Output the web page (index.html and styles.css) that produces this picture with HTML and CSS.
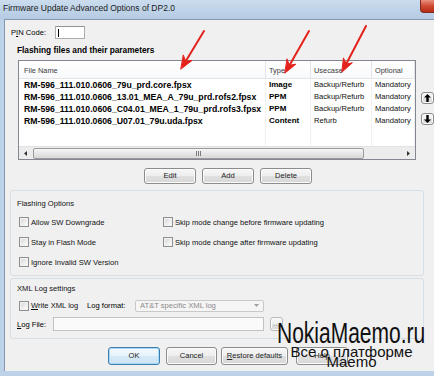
FILE: index.html
```html
<!DOCTYPE html>
<html lang="en">
  <head>
    <meta charset="UTF-8" />
    <title>Firmware Update Advanced Options of DP2.0</title>
    <link rel="stylesheet" href="styles.css">
  </head>
  <body>
    <div class="window">
      <div class="titlebar">
        <span class="title">Firmware Update Advanced Options of DP2.0</span>
        <span class="close"></span>
      </div>

      <div class="client">
        <div class="pin-row">
          <label class="pin-label">P<u>I</u>N Code:</label>
          <div class="textbox pin-box"><span class="caret"></span></div>
        </div>

        <div class="section-title">Flashing files and their parameters</div>

        <div class="files">
          <div class="listview">
            <div class="lv-row lv-head">
              <div class="lv-cell">File Name</div>
              <div class="lv-cell">Type</div>
              <div class="lv-cell">Usecase</div>
              <div class="lv-cell">Optional</div>
            </div>
            <div class="lv-row">
              <div class="lv-cell file">RM-596_111.010.0606_79u_prd.core.fpsx</div>
              <div class="lv-cell type">Image</div>
              <div class="lv-cell">Backup/Refurb</div>
              <div class="lv-cell">Mandatory</div>
            </div>
            <div class="lv-row">
              <div class="lv-cell file">RM-596_111.010.0606_13.01_MEA_A_79u_prd.rofs2.fpsx</div>
              <div class="lv-cell type">PPM</div>
              <div class="lv-cell">Backup/Refurb</div>
              <div class="lv-cell">Mandatory</div>
            </div>
            <div class="lv-row">
              <div class="lv-cell file">RM-596_111.010.0606_C04.01_MEA_1_79u_prd.rofs3.fpsx</div>
              <div class="lv-cell type">PPM</div>
              <div class="lv-cell">Backup/Refurb</div>
              <div class="lv-cell">Mandatory</div>
            </div>
            <div class="lv-row">
              <div class="lv-cell file">RM-596_111.010.0606_U07.01_79u.uda.fpsx</div>
              <div class="lv-cell type">Content</div>
              <div class="lv-cell">Refurb</div>
              <div class="lv-cell">Mandatory</div>
            </div>
            <div class="lv-row lv-fill">
              <div class="lv-cell"></div>
              <div class="lv-cell"></div>
              <div class="lv-cell"></div>
              <div class="lv-cell"></div>
            </div>
            <div class="hscroll">
              <span class="sb-arrow">
                <svg width="3" height="5" viewBox="0 0 3 5"><path d="M3 0V5L0 2.5Z" fill="#333"/></svg>
              </span>
              <span class="sb-thumb"><span class="grip"></span></span>
              <span class="sb-arrow sb-right">
                <svg width="3" height="5" viewBox="0 0 3 5"><path d="M0 0V5L3 2.5Z" fill="#333"/></svg>
              </span>
            </div>
          </div>

          <div class="move-btns">
            <button class="btn move">
              <svg width="7" height="8" viewBox="0 0 7 8"><path d="M3.5 0L7 3.6H4.7V8H2.3V3.6H0Z" fill="#000"/></svg>
            </button>
            <button class="btn move">
              <svg width="7" height="8" viewBox="0 0 7 8"><path d="M3.5 8L7 4.4H4.7V0H2.3V4.4H0Z" fill="#000"/></svg>
            </button>
          </div>
        </div>

        <div class="list-actions">
          <button class="btn">Edit</button>
          <button class="btn">Add</button>
          <button class="btn">Delete</button>
        </div>

        <div class="group flash-opts">
          <div class="group-title">Flashing Options</div>
          <div class="opt-grid">
            <label class="check"><span class="box"></span>Allow SW Downgrade</label>
            <label class="check"><span class="box"></span>Skip mode change before firmware updating</label>
            <label class="check"><span class="box"></span>Stay in Flash Mode</label>
            <label class="check"><span class="box"></span>Skip mode change after firmware updating</label>
            <label class="check"><span class="box"></span>Ignore Invalid SW Version</label>
          </div>
        </div>

        <div class="group xml-opts">
          <div class="group-title">XML Log settings</div>
          <div class="xml-row">
            <label class="check write-log"><span class="box"></span><span><u>W</u>rite XML log</span></label>
            <span class="fmt-label">Log format:</span>
            <div class="combo">
              <span>AT&amp;T specific XML log</span>
              <svg width="5" height="3" viewBox="0 0 5 3"><path d="M0 0H5L2.5 3Z" fill="#a0a0a0"/></svg>
            </div>
          </div>
          <div class="file-row">
            <span class="file-label"><u>L</u>og File:</span>
            <div class="textbox log-box"></div>
            <button class="btn browse">...</button>
          </div>
        </div>

        <div class="dialog-btns">
          <button class="btn default">OK</button>
          <button class="btn cancel">Cancel</button>
          <button class="btn restore"><u>R</u>estore defaults</button>
          <button class="btn help">Help</button>
        </div>
      </div>
    </div>

    <!-- red annotation arrows drawn over the screenshot -->
    <svg class="marks" width="434" height="376" viewBox="0 0 434 376">
      <g stroke="#e3221c" stroke-width="2" stroke-linecap="round" fill="#e3221c">
        <line x1="204" y1="31" x2="185.7" y2="61.3"/>
        <polygon points="181,69 192,60.5 185.7,61.3 183.4,55.3" stroke-width="1" stroke-linejoin="round"/>
        <line x1="309" y1="31" x2="289.5" y2="65.2"/>
        <polygon points="285,73 295.8,64.2 289.5,65.2 287.1,59.2" stroke-width="1" stroke-linejoin="round"/>
        <line x1="366" y1="26" x2="346.2" y2="64"/>
        <polygon points="342,72 352.4,62.8 346.2,64 343.6,58.2" stroke-width="1" stroke-linejoin="round"/>
      </g>
    </svg>

    <div class="watermark">
      <div class="wm-big">NokiaMaemo.ru</div>
      <div class="wm-small">Все о платформе</div>
      <div class="wm-small">Maemo</div>
    </div>
  </body>
</html>
```

FILE: styles.css
```css
/* Reset */
* {
  margin: 0;
  padding: 0;
  box-sizing: border-box;
}

body {
  width: 434px;
  height: 376px;
  overflow: hidden;
  position: relative;
  font-family: "Liberation Sans", Arial, sans-serif;
  font-size: 7.6px;
  color: #000;
  background: #bdd2e8;
}

/* Window frame */
.window {
  height: 376px;
  display: flex;
  flex-direction: column;
}

.titlebar {
  height: 19px;
  flex: none;
  display: flex;
  align-items: flex-start;
  background: linear-gradient(#cbdcee, #b5cbe3);
}

.title {
  padding: 3px 0 0 3px;
  font-size: 8.5px;
  line-height: 10px;
  color: #1b1b1b;
}

.close {
  margin-left: auto;
  width: 14px;
  height: 13px;
  border: 1px solid #7a2c22;
  border-top: 0;
  border-right: 0;
  border-radius: 0 0 0 4px;
  background: linear-gradient(#e8917f, #cf4a32 50%, #b72c16);
}

.client {
  flex: 1;
  margin: 0 0 5px 4px;
  padding: 6px 0 0 5px;
  border-left: 1px solid #8598ad;
  border-top: 1px solid #8598ad;
  background: #f0f0f0;
}

/* PIN */
.pin-row {
  display: flex;
  align-items: center;
  height: 13px;
}

.pin-label {
  width: 45px;
  padding-left: 1px;
}

.textbox {
  background: #fff;
  border: 1px solid #abadb3;
  border-top-color: #8f9297;
}

.pin-box {
  width: 30px;
  height: 13px;
  padding: 2px 0 0 2px;
}

.caret {
  display: block;
  width: 1px;
  height: 8px;
  background: #000;
}

.section-title {
  margin: 5px 0 0 7px;
  font-size: 8.3px;
  font-weight: bold;
  line-height: 12px;
}

/* File list */
.files {
  display: flex;
  margin: 4px 0 0 8px;
}

.listview {
  width: 399px;
  height: 100px;
  display: flex;
  flex-direction: column;
  border: 1px solid #828790;
  background: #fff;
}

.lv-row {
  flex: none;
  display: grid;
  grid-template-columns: 247px 45px 61px 1fr;
  height: 12px;
  line-height: 12px;
}

.lv-cell {
  padding-left: 3px;
  border-right: 1px solid #f1f1f1;
  white-space: nowrap;
  overflow: hidden;
  color: #111;
}

.lv-cell:first-child {
  padding-left: 5px;
}

.lv-cell.file {
  font-size: 8.7px;
  font-weight: bold;
  color: #000;
}

.lv-cell.type {
  font-size: 8px;
  font-weight: bold;
  color: #000;
}

.lv-head {
  height: 18px;
  line-height: 14px;
  background: linear-gradient(#fff, #f8f9fb);
  border-bottom: 1px solid #e5e5e5;
}

.lv-head .lv-cell {
  padding-top: 3px;
  font-size: 7.4px;
  color: #3b3b3b;
  border-right-color: #e3e5e8;
}

.lv-fill {
  flex: 1;
  height: auto;
}

.hscroll {
  flex: none;
  height: 13px;
  display: flex;
  align-items: center;
  background: #ececec;
  border-top: 1px solid #e2e2e2;
}

.sb-arrow {
  width: 13px;
  height: 12px;
  display: flex;
  align-items: center;
  justify-content: center;
}

.sb-right {
  margin-left: auto;
}

.sb-thumb {
  width: 331px;
  height: 11px;
  margin-left: 1px;
  display: flex;
  align-items: center;
  justify-content: center;
  border: 1px solid #9a9a9a;
  border-radius: 2px;
  background: linear-gradient(#f6f6f6, #e6e6e6 50%, #d8d8d8);
}

.grip {
  width: 5px;
  height: 5px;
  background: repeating-linear-gradient(90deg, #7d7d7d 0 1px, transparent 1px 2px);
}

.move-btns {
  display: flex;
  flex-direction: column;
  gap: 9px;
  margin: 32px 0 0 5px;
}

/* Buttons */
.btn {
  width: 52px;
  height: 16px;
  font-family: inherit;
  font-size: 7.6px;
  line-height: 14px;
  color: #222;
  border: 1px solid #8c8c8c;
  border-radius: 3px;
  background: linear-gradient(#f7f7f7, #ededed 50%, #e0e0e0 51%, #d7d7d7);
  box-shadow: inset 0 0 0 1px #fbfbfb;
}

.btn.move {
  width: 13px;
  height: 12px;
  display: flex;
  align-items: center;
  justify-content: center;
}

.list-actions {
  display: flex;
  gap: 6px;
  margin: 8px 0 0 134px;
}

/* Option groups */
.group {
  width: 414px;
  border: 1px solid #d5dfe5;
  border-radius: 3px;
}

.flash-opts {
  margin-top: 6px;
  padding-bottom: 6px;
}

.xml-opts {
  margin-top: 2px;
  padding-bottom: 7px;
}

.group-title {
  padding: 7px 0 0 6px;
  line-height: 12px;
  color: #111;
}

.xml-opts .group-title {
  padding-top: 4px;
}

.opt-grid {
  display: grid;
  grid-template-columns: 144px 1fr;
  row-gap: 6px;
  margin: 5px 0 0 8px;
}

.check {
  display: flex;
  align-items: center;
  gap: 2px;
  height: 14px;
  white-space: nowrap;
  color: #111;
}

.box {
  flex: none;
  width: 10px;
  height: 10px;
  border: 1px solid #8f8f8f;
  background: linear-gradient(135deg, #d6d6d6, #f7f7f7 80%);
  box-shadow: inset 0 0 0 1px #f2f2f2;
}

.xml-row {
  display: flex;
  align-items: center;
  height: 13px;
  margin: 4px 0 0 8px;
}

.write-log {
  width: 68px;
}

.fmt-label {
  width: 48px;
}

.combo {
  width: 129px;
  height: 12px;
  display: flex;
  align-items: center;
  justify-content: space-between;
  padding: 0 4px 0 4px;
  color: #8a8a8a;
  background: #f5f5f5;
  border: 1px solid #c9c9c9;
  border-radius: 2px;
}

.file-row {
  display: flex;
  align-items: center;
  height: 14px;
  margin: 5px 0 0 6px;
}

.file-label {
  width: 36px;
}

.log-box {
  width: 211px;
  height: 14px;
  background: #fafafa;
  border-color: #c2c2c2;
}

.btn.browse {
  width: 13px;
  height: 14px;
  margin-left: 6px;
  line-height: 10px;
  color: #8a8a8a;
  border-color: #b8b8b8;
}

.dialog-btns {
  display: flex;
  margin: 8px 0 0 98px;
}

.dialog-btns .btn {
  height: 18px;
  line-height: 16px;
}

.btn.default {
  border-color: #3c7fb1;
  background: linear-gradient(#f4fafd, #e6f2fa 50%, #d6e9f6 51%, #cde4f4);
  box-shadow: inset 0 0 0 1px #a9d7f3;
}

.btn.cancel {
  width: 51px;
  margin-left: 6px;
}

.btn.restore {
  width: 67px;
  margin-left: 4px;
}

.btn.help {
  margin-left: 8px;
}

/* Overlays */
.marks {
  position: absolute;
  left: 0;
  top: 0;
  pointer-events: none;
}

.watermark {
  position: absolute;
  left: 277px;
  top: 318px;
  width: 149px;
  font-family: "Liberation Sans", Arial, sans-serif;
  color: #111;
  pointer-events: none;
}

.wm-big {
  font-size: 30px;
  line-height: 29px;
  white-space: nowrap;
  transform: scaleX(0.7);
  transform-origin: left top;
}

.wm-small {
  font-size: 15px;
  line-height: 10px;
  text-align: center;
  white-space: nowrap;
}
```
